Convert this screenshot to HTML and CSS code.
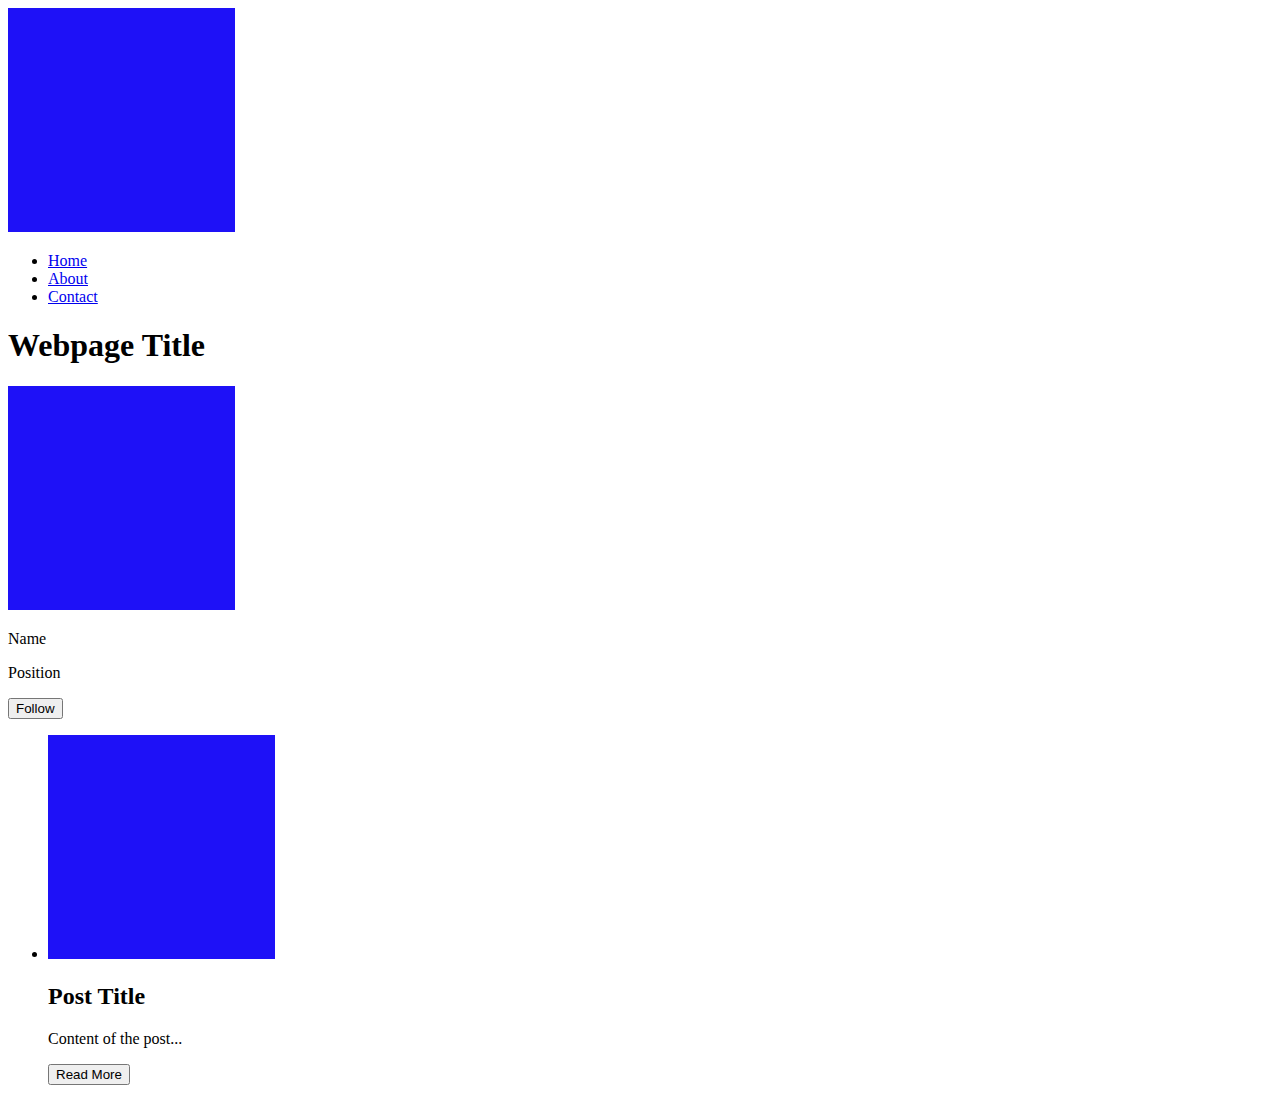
FILE: index.html
```html
<!DOCTYPE html>
<html>
<head>
<meta charset="utf-8">
<title>Webpage Title</title>
<link rel="stylesheet" href="styles.css">
</head>
<body>
<header class="site-header">
  <div class="logo"><span class="pic"></span></div>
  <nav>
    <ul class="nav-list">
      <li><a href="#">Home</a></li>
      <li><a href="#">About</a></li>
      <li><a href="#">Contact</a></li>
    </ul>
  </nav>
</header>
<main>
  <h1>Webpage Title</h1>
  <section class="profile">
    <div class="avatar"><span class="pic"></span></div>
    <p>Name</p>
    <p>Position</p>
    <button class="btn">Follow</button>
  </section>
  <ul class="posts">
    <li>
      <span class="pic"></span>
      <h2>Post Title</h2>
      <p>Content of the post...</p>
      <button class="btn">Read More</button>
    </li>
  </ul>
</main>
</body>
</html>
```
FILE: styles.css
```css
body {
  margin: 8px;
  font-family: "Liberation Serif", "Times New Roman", serif;
  font-size: 16px;
  color: #000;
  background: #fff;
}
.pic {
  display: inline-block;
  width: 227px;
  height: 224px;
  background: #1e11f7;
}
.nav-list a {
  color: #0000ee;
}
.btn {
  font-family: "Liberation Sans", Arial, sans-serif;
  font-size: 13.333px;
}
.posts {
  margin-bottom: 16px;
}
```
